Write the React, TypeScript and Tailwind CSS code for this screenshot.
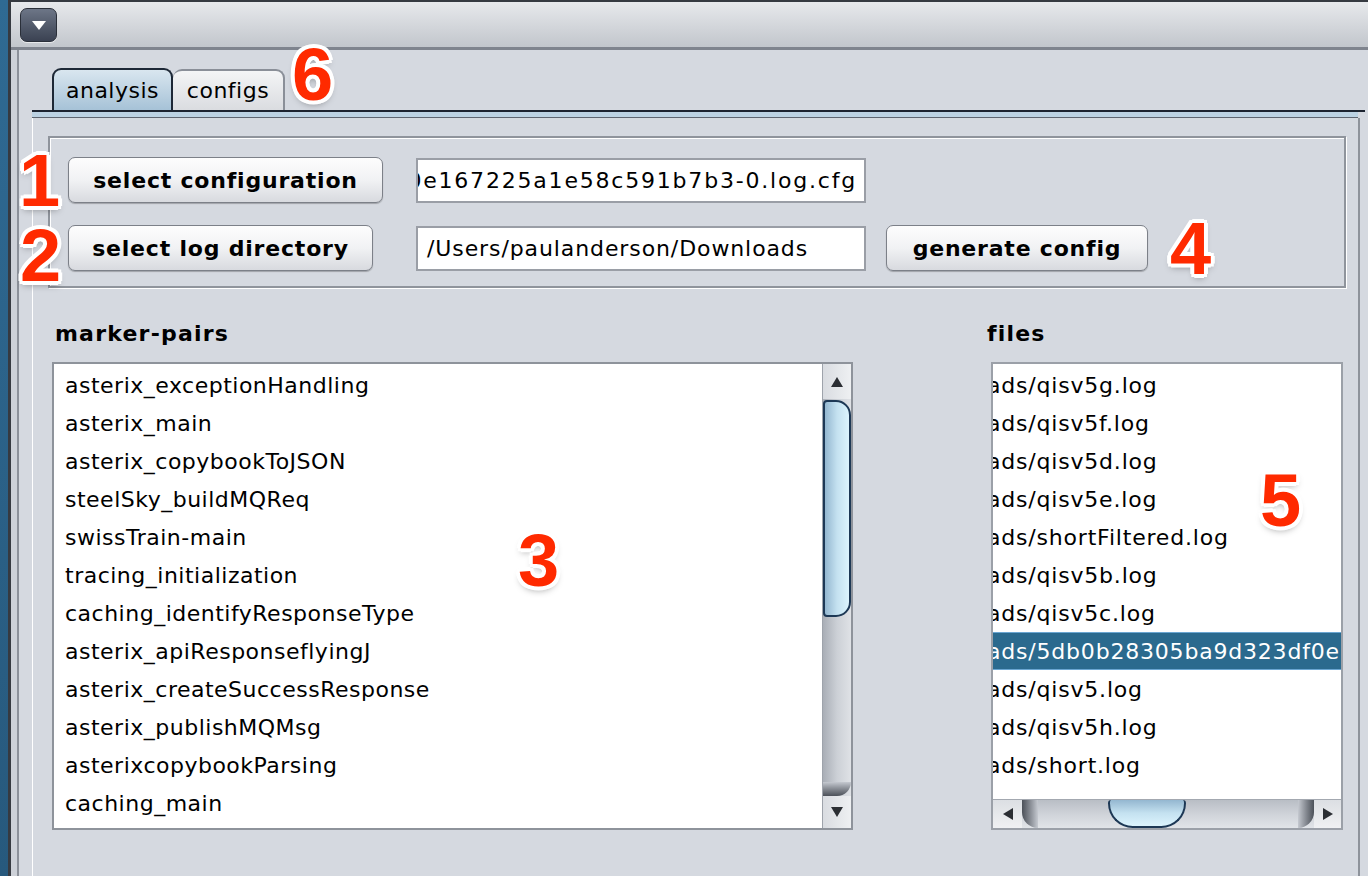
import React from "react";

const markers = [
  "asterix_exceptionHandling",
  "asterix_main",
  "asterix_copybookToJSON",
  "steelSky_buildMQReq",
  "swissTrain-main",
  "tracing_initialization",
  "caching_identifyResponseType",
  "asterix_apiResponseflyingJ",
  "asterix_createSuccessResponse",
  "asterix_publishMQMsg",
  "asterixcopybookParsing",
  "caching_main",
];

const files = [
  "qisv5g.log",
  "qisv5f.log",
  "qisv5d.log",
  "qisv5e.log",
  "shortFiltered.log",
  "qisv5b.log",
  "qisv5c.log",
  "5db0b28305ba9d323df0e167225a1e58c591b7b3-0.log",
  "qisv5.log",
  "qisv5h.log",
  "short.log",
];

const Tri = ({ dir }: { dir: "up" | "down" | "left" | "right" }) => {
  const pts = {
    up: "0,10 6,0 12,10",
    down: "0,0 12,0 6,10",
    left: "10,0 10,12 0,6",
    right: "0,0 10,6 0,12",
  }[dir];
  const vertical = dir === "up" || dir === "down";
  return (
    <svg width={vertical ? 12 : 10} height={vertical ? 10 : 12}>
      <polygon points={pts} fill="#2b2e33" />
    </svg>
  );
};

const AquaButton = ({ label, width }: { label: string; width: string }) => (
  <button
    className={`${width} h-[46px] rounded-[7px] border border-[#7c8088] bg-gradient-to-b from-[#fdfdfd] via-[#f1f2f4] to-[#d8dadf] shadow-[0_1px_1px_rgba(0,0,0,0.25)] text-[22px] font-bold tracking-[0.8px] text-black`}
  >
    {label}
  </button>
);

const Num = ({ n, pos }: { n: string; pos: string }) => (
  <div
    className={`absolute ${pos} font-['Liberation_Sans',Arial,sans-serif] font-bold text-[74px] leading-none text-[#ff2a00] [text-shadow:4px_0_0_#fff,-4px_0_0_#fff,0_4px_0_#fff,0_-4px_0_#fff,3px_3px_0_#fff,-3px_-3px_0_#fff,3px_-3px_0_#fff,-3px_3px_0_#fff,0_4px_7px_rgba(0,0,0,0.35)]`}
  >
    {n}
  </div>
);

export default function App() {
  return (
    <div className="relative w-[1368px] h-[876px] overflow-hidden flex bg-[#2c5f85] font-['DejaVu_Sans',sans-serif] text-black">
      <div className="w-[8px] bg-gradient-to-b from-[#2f6a93] to-[#27597d]" />
      <div className="flex-1 flex flex-col border-l-[3px] border-t-[2px] border-[#363a41]">
        {/* title strip */}
        <div className="h-[45px] shrink-0 bg-gradient-to-b from-[#e7e9ec] to-[#c2c6cc] pl-[9px] pt-[6px]">
          <div className="w-[37px] h-[34px] rounded-[7px] border border-[#2a2f39] bg-gradient-to-b from-[#6d7687] to-[#3b4252] shadow-[0_1px_0_rgba(255,255,255,0.6)] flex items-center justify-center">
            <svg width="14" height="9">
              <polygon points="0,0 14,0 7,9" fill="#fff" />
            </svg>
          </div>
        </div>
        <div className="h-[3px] shrink-0 bg-[#7f848e]" />

        <div className="flex-1 flex bg-[#d5d9e0]">
          <div className="w-[6px] bg-[#cdd1d8]" />
          <div className="w-[2px] bg-[#8c919a]" />
          <div className="flex-1 flex flex-col pl-[13px] pt-[18px]">
            {/* tabs */}
            <div className="h-[42px] flex items-end pl-[20px]">
              <div className="h-[42px] w-[121px] rounded-t-[9px] border-2 border-b-0 border-[#1d2836] bg-gradient-to-b from-[#d9e6ef] to-[#a6c2d7] flex items-center justify-center text-[22px] tracking-[0.5px]">
                analysis
              </div>
              <div className="h-[41px] w-[112px] rounded-t-[9px] border-2 border-b-0 border-l-0 border-[#8a8f98] bg-gradient-to-b from-[#f4f5f6] to-[#dadce0] flex items-center justify-center text-[22px] tracking-[0.5px]">
                configs
              </div>
            </div>
            <div className="h-[2px] bg-[#1c2330] mr-[3px]" />
            <div className="h-[5px] bg-[#bcd2e3] mr-[10px]" />
            <div className="h-[1px] bg-[#5e6570] mr-[10px]" />

            {/* tab pane */}
            <div className="flex-1 mr-[8px] border-l border-white border-r-2 border-r-[#8e939b] pl-[15px] pt-[18px]">
              <div className="w-[1298px] border-2 border-[#8f949c] shadow-[1px_1px_0_#fff,inset_1px_1px_0_#fff] pl-[18px] pt-[19px] pb-[15px]">
                <div className="flex items-center h-[46px]">
                  <div className="w-[348px]">
                    <AquaButton label="select configuration" width="w-[315px]" />
                  </div>
                  <div className="w-[450px] h-[45px] border-2 border-[#9a9ea6] bg-white flex items-center justify-end overflow-hidden pr-[7px]">
                    <span className="whitespace-nowrap text-[22px] tracking-[1.8px]">
                      /Users/paulanderson/Downloads/5db0b28305ba9d323df0e167225a1e58c591b7b3-0.log.cfg
                    </span>
                  </div>
                </div>
                <div className="flex items-center h-[46px] mt-[22px]">
                  <div className="w-[348px]">
                    <AquaButton label="select log directory" width="w-[305px]" />
                  </div>
                  <div className="w-[450px] h-[45px] border-2 border-[#9a9ea6] bg-white flex items-center overflow-hidden pl-[9px]">
                    <span className="whitespace-nowrap text-[22px] tracking-[0.9px]">/Users/paulanderson/Downloads</span>
                  </div>
                  <div className="ml-[20px]">
                    <AquaButton label="generate config" width="w-[262px]" />
                  </div>
                </div>
              </div>

              {/* lists */}
              <div className="flex mt-[30px] pl-[4px]">
                <div className="flex flex-col w-[801px]">
                  <div className="h-[30px] pl-[3px] flex items-center text-[22px] font-bold tracking-[1.2px]">marker-pairs</div>
                  <div className="mt-[14px] h-[468px] border-2 border-[#8e939b] bg-white flex">
                    <div className="flex-1 overflow-hidden pt-[2px]">
                      {markers.map((m) => (
                        <div key={m} className="h-[38px] flex items-center pl-[11px] text-[22px] tracking-[0.5px] whitespace-nowrap">
                          {m}
                        </div>
                      ))}
                    </div>
                    {/* vertical scrollbar */}
                    <div className="w-[29px] flex flex-col bg-gradient-to-r from-[#a9aeb6] via-[#ccd0d6] to-[#dfe2e6] border-l border-[#9ea3ab]">
                      <div className="h-[35px] flex items-center justify-center bg-gradient-to-r from-[#d9dce1] to-[#eef0f2]">
                        <Tri dir="up" />
                      </div>
                      <div className="h-[217px] mt-[1px] rounded-r-[15px] rounded-l-[4px] border-2 border-[#1d3855] bg-gradient-to-r from-[#94b7d0] via-[#c4e1f0] to-[#dcf4fd]" />
                      <div className="flex-1" />
                      <div className="h-[14px] rounded-br-[16px] bg-gradient-to-b from-[#c5c9d0] to-[#4c5159]" />
                      <div className="h-[32px] flex items-center justify-center bg-gradient-to-r from-[#d9dce1] to-[#eef0f2]">
                        <Tri dir="down" />
                      </div>
                    </div>
                  </div>
                </div>

                <div className="flex flex-col ml-[134px] w-[356px]">
                  <div className="h-[30px] flex items-center text-[22px] font-bold tracking-[1.2px]">files</div>
                  <div className="mt-[14px] ml-[4px] w-[352px] h-[468px] border-2 border-[#9ba0a8] bg-white flex flex-col">
                    <div className="flex-1 overflow-hidden pt-[2px]">
                      {files.map((f, i) => {
                        const sel = i === 7;
                        return (
                          <div
                            key={f}
                            className={`h-[38px] flex items-center text-[22px] tracking-[0.8px] whitespace-nowrap ${
                              sel ? "bg-[#2b6a8e] text-white border-y border-[#6aa6d2]" : ""
                            }`}
                          >
                            <span className="w-0 shrink-0 flex justify-end ml-[-6px]">
                              <span className="whitespace-nowrap">/Users/paulanderson/Downlo</span>
                            </span>
                            <span>ads/{f}</span>
                          </div>
                        );
                      })}
                    </div>
                    {/* horizontal scrollbar */}
                    <div className="h-[29px] flex bg-gradient-to-b from-[#b9bec5] via-[#cfd3d9] to-[#e1e4e8] border-t border-[#a3a8b0]">
                      <div className="w-[29px] flex items-center justify-center bg-gradient-to-b from-[#dcdfe3] to-[#f0f1f3]">
                        <Tri dir="left" />
                      </div>
                      <div className="w-[16px] rounded-bl-[16px] bg-gradient-to-r from-[#4c5159] to-[#c5c9d0]" />
                      <div className="w-[70px]" />
                      <div className="w-[78px] h-[28px] rounded-b-[30px] rounded-t-[4px] border-2 border-t-0 border-[#1d3855] bg-gradient-to-b from-[#94b7d0] via-[#c4e1f0] to-[#dcf4fd]" />
                      <div className="flex-1" />
                      <div className="w-[16px] rounded-br-[16px] bg-gradient-to-r from-[#c5c9d0] to-[#4c5159]" />
                      <div className="w-[27px] flex items-center justify-center bg-gradient-to-b from-[#dcdfe3] to-[#f0f1f3]">
                        <Tri dir="right" />
                      </div>
                    </div>
                  </div>
                </div>
              </div>
            </div>
          </div>
        </div>
      </div>

      <Num n="6" pos="left-[292px] top-[38px]" />
      <Num n="1" pos="left-[19px] top-[144px]" />
      <Num n="2" pos="left-[20px] top-[219px]" />
      <Num n="4" pos="left-[1170px] top-[212px]" />
      <Num n="3" pos="left-[518px] top-[524px]" />
      <Num n="5" pos="left-[1260px] top-[464px]" />
    </div>
  );
}
